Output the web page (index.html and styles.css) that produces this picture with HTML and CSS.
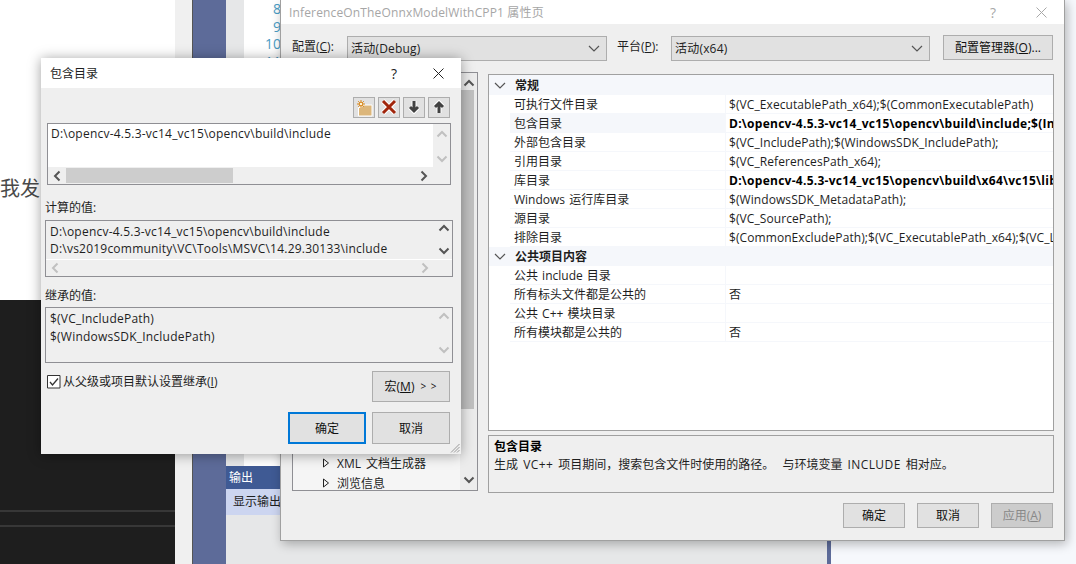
FILE: index.html
```html
<!DOCTYPE html>
<html lang="zh-CN">
<head>
<meta charset="utf-8">
<title>包含目录</title>
<link rel="stylesheet" href="styles.css">
</head>
<body>
<svg class="defs" width="0" height="0">
  <symbol id="up" viewBox="0 0 12 8"><path d="M1.5 6.5 6 2l4.500 4.500" fill="none" stroke="currentColor" stroke-width="2"/></symbol>
  <symbol id="down" viewBox="0 0 12 8"><path d="M1.500 1.500 6 6l4.500-4.500" fill="none" stroke="currentColor" stroke-width="2"/></symbol>
  <symbol id="left" viewBox="0 0 8 12"><path d="M6.500 1.500 2 6l4.500 4.500" fill="none" stroke="currentColor" stroke-width="2"/></symbol>
  <symbol id="right" viewBox="0 0 8 12"><path d="M1.500 1.500 6 6l-4.500 4.500" fill="none" stroke="currentColor" stroke-width="2"/></symbol>
  <symbol id="caret" viewBox="0 0 12 7"><path d="M1 1l5 5 5-5" fill="none" stroke="currentColor" stroke-width="1.200"/></symbol>
  <symbol id="tri" viewBox="0 0 6 10"><path d="M.5 1v8l5-4z" fill="none" stroke="currentColor"/></symbol>
</svg>
<div class="desk">

  <section class="article">
    <p class="article-text">我发</p>
    <div class="code-block"><i class="code-line"></i><i class="code-line"></i></div>
  </section>

  <section class="vs">
    <div class="vs-gutter"></div>
    <div class="vs-rail"></div>
    <div class="vs-main">
      <div class="vs-lines"><span>8</span><span>9</span><span>10</span><span>11</span></div>
      <div class="vs-output">
        <div class="out-head">输出</div>
        <div class="out-row">显示输出</div>
      </div>
    </div>
    <div class="vs-edge"></div>
  </section>

  <section class="props">
    <header class="props-title">
      <span class="props-name">InferenceOnTheOnnxModelWithCPP1 属性页</span>
      <span class="props-help">?</span>
      <svg class="props-close" width="11" height="11" viewBox="0 0 11 11"><path d="M.5.5l10 10M10.500.5l-10 10" stroke="#a8a8a8" fill="none"/></svg>
    </header>
    <div class="config">
      <span class="config-label first">配置(<u>C</u>):</span>
      <div class="select first-select"><span>活动(Debug)</span><svg width="12" height="7"><use href="#caret"/></svg></div>
      <span class="config-label second">平台(<u>P</u>):</span>
      <div class="select second-select"><span>活动(x64)</span><svg width="12" height="7"><use href="#caret"/></svg></div>
      <button class="btn manager"><span>配置管理器(<u>O</u>)...</span></button>
    </div>
    <div class="panes">
      <div class="tree">
        <div class="tree-list">
          <div class="tree-item"><svg width="6" height="10"><use href="#tri"/></svg><span>XML 文档生成器</span></div>
          <div class="tree-item"><svg width="6" height="10"><use href="#tri"/></svg><span>浏览信息</span></div>
        </div>
        <div class="tree-scroll">
          <svg class="tree-up" width="12" height="8"><use href="#up"/></svg>
          <div class="tree-thumb"></div>
          <svg class="tree-down" width="12" height="8"><use href="#down"/></svg>
        </div>
      </div>
      <div class="right">
        <div class="grid">
          <div class="group"><svg width="12" height="7"><use href="#caret"/></svg><b>常规</b></div>
          <div class="row"><span>可执行文件目录</span><span class="var">$(VC_ExecutablePath_x64);$(CommonExecutablePath)</span></div>
          <div class="row selected"><span>包含目录</span><span class="strong">D:\opencv-4.5.3-vc14_vc15\opencv\build\include;$(IncludePath)</span></div>
          <div class="row"><span>外部包含目录</span><span class="var">$(VC_IncludePath);$(WindowsSDK_IncludePath);</span></div>
          <div class="row"><span>引用目录</span><span class="var">$(VC_ReferencesPath_x64);</span></div>
          <div class="row"><span>库目录</span><span class="strong">D:\opencv-4.5.3-vc14_vc15\opencv\build\x64\vc15\lib;$(LibraryPath)</span></div>
          <div class="row"><span>Windows 运行库目录</span><span class="var">$(WindowsSDK_MetadataPath);</span></div>
          <div class="row"><span>源目录</span><span class="var">$(VC_SourcePath);</span></div>
          <div class="row"><span>排除目录</span><span class="var">$(CommonExcludePath);$(VC_ExecutablePath_x64);$(VC_LibraryPath_x64);</span></div>
          <div class="group"><svg width="12" height="7"><use href="#caret"/></svg><b>公共项目内容</b></div>
          <div class="row"><span>公共 include 目录</span><span></span></div>
          <div class="row"><span>所有标头文件都是公共的</span><span>否</span></div>
          <div class="row"><span>公共 C++ 模块目录</span><span></span></div>
          <div class="row"><span>所有模块都是公共的</span><span>否</span></div>
        </div>
        <div class="desc">
          <b>包含目录</b>
          <p>生成 <span class="lat">VC++</span> 项目期间，搜索包含文件时使用的路径。 <span class="gap">与环境变量</span> <span class="lat">INCLUDE</span> 相对应。</p>
        </div>
      </div>
    </div>
    <footer class="props-foot">
      <button class="btn foot">确定</button>
      <button class="btn foot">取消</button>
      <button class="btn foot disabled"><span>应用(<u>A</u>)</span></button>
    </footer>
  </section>

  <section class="dialog">
    <header class="dialog-title">
      <span class="dialog-name">包含目录</span>
      <span class="dialog-help">?</span>
      <svg class="dialog-close" width="11" height="11" viewBox="0 0 11 11"><path d="M.5.500l10 10M10.500.500l-10 10" stroke="#222" fill="none"/></svg>
    </header>
    <div class="dialog-body">
      <div class="toolbar">
        <button class="tool"><svg width="20" height="19" viewBox="0 0 20 19"><path d="M4.500 9.500h3l1-2.500h9.500v11h-13.500z" fill="#dcb67a" stroke="#fff"/><path d="M7 2v8M3 6h8M4.200 3.200l5.600 5.600M9.800 3.200 4.200 8.800" stroke="#d9891f"/><circle cx="7" cy="6" r="1.800" fill="#fff3d6" stroke="#d9891f"/></svg></button>
        <button class="tool"><svg width="20" height="19" viewBox="0 0 20 19"><path d="M4 3l12 12M16 3 4 15" stroke="#fff" stroke-width="5"/><path d="M4 3l12 12M16 3 4 15" stroke="#a1260d" stroke-width="3"/></svg></button>
        <button class="tool"><svg width="20" height="19" viewBox="0 0 20 19"><path d="M10 3v10M6 9l4 4 4-4" fill="none" stroke="#fff" stroke-width="5"/><path d="M10 3v10M6 9l4 4 4-4" fill="none" stroke="#424242" stroke-width="3"/></svg></button>
        <button class="tool"><svg width="20" height="19" viewBox="0 0 20 19"><path d="M10 15V5M6 9l4-4 4 4" fill="none" stroke="#fff" stroke-width="5"/><path d="M10 15V5M6 9l4-4 4 4" fill="none" stroke="#424242" stroke-width="3"/></svg></button>
      </div>
      <div class="edit">
        <div class="edit-main">
          <div class="edit-text white path">D:\opencv-4.5.3-vc14_vc15\opencv\build\include</div>
          <div class="vbar top"><svg width="12" height="8"><use href="#up"/></svg><svg width="12" height="8"><use href="#down"/></svg></div>
        </div>
        <div class="hbar">
          <svg width="8" height="12" class="dark"><use href="#left"/></svg>
          <div class="hthumb"></div>
          <svg width="8" height="12" class="dark"><use href="#right"/></svg>
        </div>
      </div>
      <div class="label computed-label">计算的值:</div>
      <div class="box computed">
        <div class="edit-main">
          <div class="edit-text path">D:\opencv-4.5.3-vc14_vc15\opencv\build\include<br>D:\vs2019community\VC\Tools\MSVC\14.29.30133\include</div>
          <div class="vbar active"><svg width="12" height="8"><use href="#up"/></svg><svg width="12" height="8"><use href="#down"/></svg></div>
        </div>
        <div class="hbar faint">
          <svg width="8" height="12"><use href="#left"/></svg>
          <svg width="8" height="12"><use href="#right"/></svg>
        </div>
      </div>
      <div class="label inherit-label">继承的值:</div>
      <div class="box inherited">
        <div class="edit-text path">$(VC_IncludePath)<br>$(WindowsSDK_IncludePath)</div>
        <div class="vbar"><svg width="12" height="8"><use href="#up"/></svg><svg width="12" height="8"><use href="#down"/></svg></div>
      </div>
      <div class="options">
        <label class="check"><svg width="14" height="14" viewBox="0 0 14 14"><path d="M.5.500h12.500v12.500H.5z" fill="#fff" stroke="#333"/><path d="M3 7l2.500 3L11 3.500" fill="none" stroke="#333" stroke-width="1.300"/></svg><span>从父级或项目默认设置继承(<u>I</u>)</span></label>
        <button class="btn macro"><span>宏(<u>M</u>)</span><span class="gt">&gt; &gt;</span></button>
      </div>
      <div class="actions">
        <button class="btn action primary">确定</button>
        <button class="btn action">取消</button>
      </div>
    </div>
    <svg class="grip" width="10" height="10" viewBox="0 0 10 10"><path d="M9.500 1 1 9.500M9.500 4 4 9.500M9.500 7 7 9.500" stroke="#999" fill="none"/></svg>
  </section>

</div>
</body>
</html>
```
FILE: styles.css
```css
* { box-sizing: border-box; }
html, body { margin: 0; padding: 0; }
body { background: #fff; font: 12px/17px "Open Sans", "Noto Sans CJK SC", sans-serif; color: #1e1e1e; }
.defs { position: absolute; }
.desk { position: relative; width: 1076px; height: 564px; overflow: hidden; background: #fff; }
button { font: inherit; color: inherit; padding: 0; }
p { margin: 0; }
b { font-weight: 700; }

/* Article behind everything */
.article { position: absolute; left: 0; top: 0; width: 175px; height: 564px; display: flex; flex-direction: column; background: #fff; }
.article-text { margin: 174px 0 0; font: 20px/28px "Noto Sans CJK SC", sans-serif; color: #4a4a4a; height: 126px; }
.code-block { flex: 1; background: #1e1e1e; padding-top: 210px; display: flex; flex-direction: column; gap: 13px; }
.code-line { display: block; height: 2px; background: #373737; }

/* Visual Studio behind */
.vs { position: absolute; left: 175px; top: 0; width: 901px; height: 564px; display: flex; background: #f6f8fc; }
.vs-gutter { width: 18px; background: #f0f0f0; border-right: 1px solid #555; }
.vs-rail { width: 33px; background: #5d6b99; }
.vs-main { width: 601px; background: #e6e7e8; display: flex; flex-direction: column; position: relative; }
.vs-lines { margin-left: 18px; height: 466px; background: #fff; display: flex; flex-direction: column; padding: 0 546px 0 0; align-items: flex-end; font-size: 14px; line-height: 17.500px; color: #4a9cc4; }
.vs-output { font-size: 12px; }
.out-head { height: 23px; background: #3f5a94; color: #fff; padding: 3px 0 0 3px; }
.out-row { height: 26px; background: #ccd5f0; padding: 4px 0 0 7px; }
.vs-edge { width: 4px; background: #5d6b99; }

/* Property pages */
.props { position: absolute; left: 280px; top: 0; width: 785px; height: 541px; background: #efefef; border: 1px solid #a0a0a0; border-top: 0; box-shadow: 2px 3px 10px rgba(0,0,0,.28); display: flex; flex-direction: column; }
.props-title { height: 24px; background: #fff; display: flex; align-items: center; padding-left: 8px; flex: none; }
.props-name { flex: 1; color: #a6a6a6; letter-spacing: .15px; }
.props-help { color: #a8a8a8; font-size: 14px; width: 46px; }
.props-close { margin-right: 17px; }
.config { height: 36px; flex: none; display: flex; align-items: flex-start; padding: 11px 0 0 11px; position: relative; }
.config-label { white-space: nowrap; margin-top: 3px; }
.config-label.first { width: 55px; }
.config-label.second { width: 54px; margin-left: 10px; }
.select { height: 25px; margin-top: 1px; background: #e1e1e1; border: 1px solid #adadad; display: flex; align-items: center; justify-content: space-between; padding: 0 6px 0 3px; color: #222; letter-spacing: .2px; }
.select svg { color: #555; }
.first-select { width: 260px; }
.second-select { width: 259px; }
.btn { background: #e1e1e1; border: 1px solid #adadad; color: #111; display: flex; align-items: center; justify-content: center; white-space: nowrap; }
.manager { width: 110px; height: 25px; margin-left: 13px; }
.panes { flex: none; height: 431px; display: flex; padding: 12px 0 0 11px; }
.tree { width: 186px; height: 419px; border: 1px solid #8f8f94; background: #f5f5f5; display: flex; align-items: stretch; margin-right: 10px; }
.tree-list { flex: 1; padding: 380px 0 0 30px; }
.tree-item { display: flex; align-items: center; gap: 8px; height: 20px; color: #1e1e1e; word-spacing: 2px; }
.tree-item svg { color: #222; }
.tree-scroll { width: 17px; background: #ececec; position: relative; display: flex; flex-direction: column; align-items: center; }
.tree-up { color: #555; margin-top: 6px; flex: none; }
.tree-thumb { width: 14px; height: 319px; margin: 3px 0 0 -3px; background: #c0c0c0; flex: none; }
.tree-down { color: #555; margin-top: auto; margin-bottom: 6px; flex: none; }
.right { width: 566px; height: 421px; margin-top: 2px; display: flex; flex-direction: column; gap: 4px; flex: none; }
.grid { height: 357px; flex: none; background: #fff; border: 1px solid #a0a0a0; overflow: hidden; display: flex; flex-direction: column; }
.group { height: 19px; line-height: 19px; flex: none; background: #f5f7fb; display: flex; align-items: center; padding-left: 5px; gap: 9px; }
.group:first-child { height: 20px; }
.group svg { color: #555; flex: none; }
.row { height: 19px; line-height: 19px; flex: none; display: grid; grid-template-columns: 215px 1fr; margin-left: 21px; border-bottom: 1px solid #f5f7fb; white-space: nowrap; overflow: hidden; }
.row span { padding: 0 0 0 4px; overflow: hidden; word-spacing: 1px; }
.row span + span { border-left: 1px solid #f5f7fb; padding-left: 3px; }
.row.selected span:first-child { background: #f5f7fb; }
.row .var { letter-spacing: .08px; }
.row .strong { font-weight: 700; color: #000; letter-spacing: .27px; }
.desc { height: 58px; flex: none; border: 1px solid #a0a0a0; background: #efefef; padding: 2px 5px; word-spacing: 2px; }
.desc b { display: block; color: #000; line-height: 18px; }
.desc p { line-height: 18px; }
.lat { letter-spacing: .4px; }
.gap { margin-left: 3px; }
.props-foot { flex: 1; display: flex; justify-content: flex-end; gap: 12px; padding: 12px 11px 0 0; }
.foot { width: 62px; height: 25px; }
.disabled { background: #ccc; color: #888; }

/* Include directories dialog */
.dialog { position: absolute; left: 41px; top: 58px; width: 420px; height: 396px; background: #efefef; box-shadow: 0 1px 12px rgba(0,0,0,.38); display: flex; flex-direction: column; }
.dialog-title { height: 30px; flex: none; background: #fff; display: flex; align-items: center; padding: 0 0 0 9px; }
.dialog-name { flex: 1; }
.dialog-help { font-size: 14px; width: 42px; color: #222; }
.dialog-close { margin-right: 17px; }
.dialog-body { flex: 1; display: flex; flex-direction: column; padding: 9px 8px 0 4px; }
.toolbar { display: flex; justify-content: flex-end; gap: 3px; height: 21px; padding-right: 3px; flex: none; }
.tool { width: 22px; height: 21px; background: #e1e1e1; border: 1px solid #adadad; display: flex; align-items: center; justify-content: center; }
.edit { margin: 5px 2px 0 2px; height: 62px; border: 1px solid #8f8f94; background: #efefef; display: flex; flex-direction: column; flex: none; }
.edit-main { flex: 1; display: flex; min-height: 0; }
.edit-text { flex: 1; padding: 1px 0 0 3px; white-space: nowrap; overflow: hidden; color: #1e1e1e; }
.edit-text.white { background: #fff; }
.path { letter-spacing: .22px; }
.vbar { width: 17px; display: flex; flex-direction: column; justify-content: space-between; align-items: center; color: #c0c0c0; padding: 4px 0 8px; flex: none; }
.vbar.top { padding: 6px 0 4px; }
.vbar.active { color: #555; padding: 3px 0 4px; }
.hbar { height: 17px; flex: none; display: flex; align-items: center; padding: 0 22px 0 5px; color: #c0c0c0; justify-content: space-between; }
.hbar .dark { color: #555; flex: none; }
.hthumb { width: 167px; height: 15px; background: #cdcdcd; margin: 0 auto 0 5px; }
.hbar.faint { background: #efefef; border-top: 1px solid #fff; padding-right: 23px; }
.label { flex: none; height: 17px; }
.computed-label { margin-top: 14px; }
.box { flex: none; border: 1px solid #8f8f94; background: #efefef; height: 57px; display: flex; }
.computed { flex-direction: column; margin-top: 4px; }
.computed .edit-text { padding: 2px 0 0 4px; }
.inherit-label { margin-top: 10px; }
.inherited { margin-top: 3px; height: 56px; }
.inherited .edit-text { padding: 2px 0 0 4px; line-height: 18px; }
.options { display: flex; justify-content: space-between; align-items: flex-start; padding: 8px 3px 0 2px; flex: none; }
.check { display: flex; align-items: center; gap: 2px; margin-top: 2px; }
.macro { width: 78px; height: 31px; gap: 6px; }
.gt { font-size: 10px; letter-spacing: 1px; }
.actions { display: flex; justify-content: flex-end; gap: 6px; padding: 10px 3px 0 0; flex: none; }
.action { width: 78px; height: 32px; }
.primary { border: 2px solid #0078d7; }
.grip { position: absolute; right: 1px; bottom: 1px; }
```
